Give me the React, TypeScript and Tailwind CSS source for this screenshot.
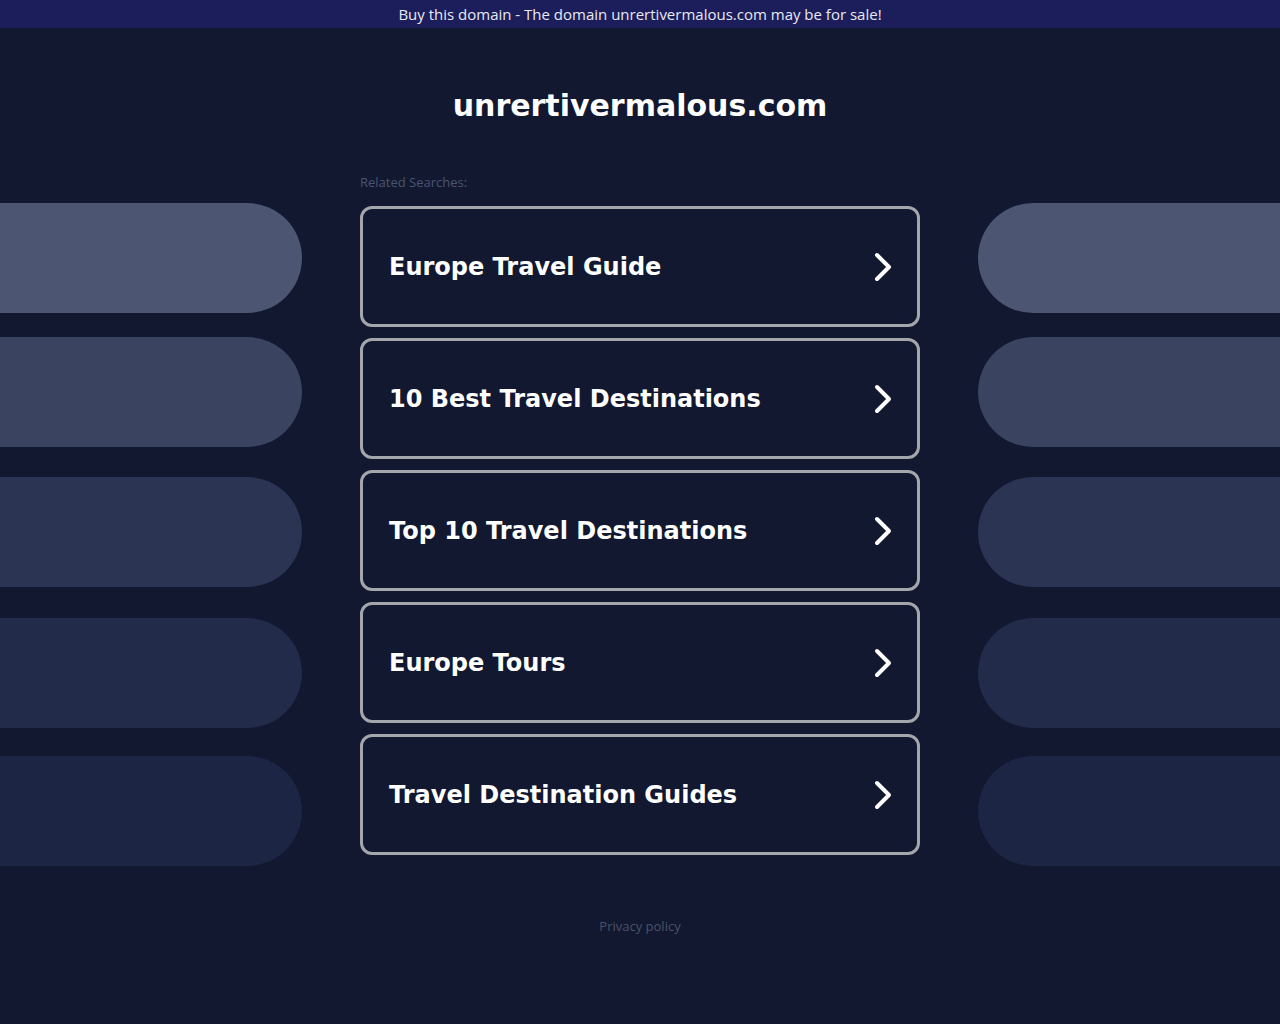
const searches = [
  "Europe Travel Guide",
  "10 Best Travel Destinations",
  "Top 10 Travel Destinations",
  "Europe Tours",
  "Travel Destination Guides",
];

const pills = [
  { mt: "mt-[175px]", color: "bg-[#4c5672]" },
  { mt: "mt-[24px]", color: "bg-[#3a4360]" },
  { mt: "mt-[30px]", color: "bg-[#2b3453]" },
  { mt: "mt-[31px]", color: "bg-[#222b4a]" },
  { mt: "mt-[28px]", color: "bg-[#1d2545]" },
];

function Chevron() {
  return (
    <svg width="20" height="30" viewBox="0 0 20 30" fill="none" className="shrink-0">
      <path
        d="M4 3 L16 15 L4 27"
        stroke="white"
        strokeWidth="4"
        strokeLinecap="round"
        strokeLinejoin="round"
      />
    </svg>
  );
}

function PillColumn({ side }: { side: "left" | "right" }) {
  return (
    <div className="flex flex-col">
      {pills.map((p, i) => (
        <div
          key={i}
          className={`${p.mt} h-[110px] w-full ${p.color} ${
            side === "left" ? "rounded-r-[55px]" : "rounded-l-[55px]"
          }`}
        />
      ))}
    </div>
  );
}

export default function App() {
  return (
    <div className="min-h-screen bg-[#121830] text-white" style={{ fontFamily: '"DejaVu Sans", sans-serif' }}>
      <div className="flex h-[28px] items-center justify-center bg-[#1b1e5b] font-['Open_Sans',sans-serif] text-[15px] font-medium text-[#e8e9f2]">
        Buy this domain - The domain unrertivermalous.com may be for sale!
      </div>

      <div className="grid grid-cols-[302px_560px_302px] justify-between">
        <PillColumn side="left" />

        <div className="flex flex-col">
          <h1 className="mt-[58px] text-center text-[30px] font-bold leading-[40px] text-white">
            unrertivermalous.com
          </h1>
          <p className="mt-[48px] font-['Open_Sans',sans-serif] text-[13px] leading-[16px] text-[#4b5571]">
            Related Searches:
          </p>
          <div className="mt-[16px] flex flex-col gap-[11px]">
            {searches.map((s) => (
              <div
                key={s}
                className="flex h-[121px] items-center justify-between rounded-[12px] border-[3px] border-[#a3a6aa] pl-[26px] pr-[24px]"
              >
                <span className="text-[24px] font-bold text-white">{s}</span>
                <Chevron />
              </div>
            ))}
          </div>
          <p className="mt-[63px] text-center font-['Open_Sans',sans-serif] text-[13px] leading-[16px] text-[#4a5169]">
            Privacy policy
          </p>
        </div>

        <PillColumn side="right" />
      </div>
    </div>
  );
}
